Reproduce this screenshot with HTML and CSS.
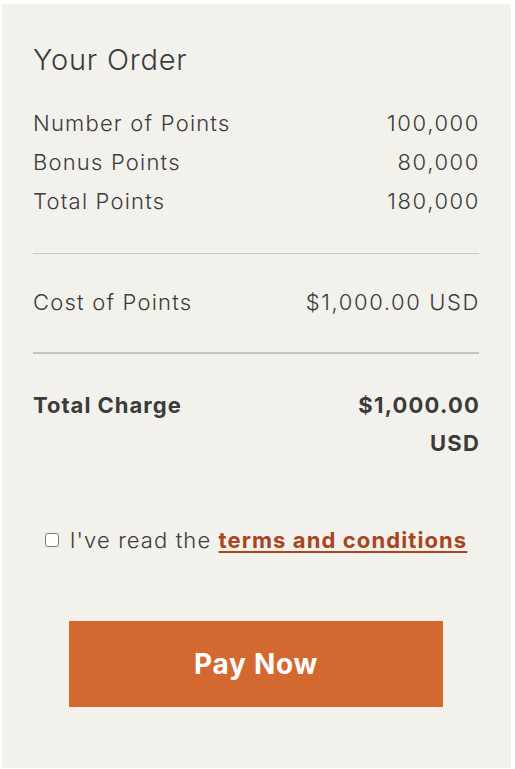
FILE: index.html
```html
<!DOCTYPE html>
<html>
<head>
<meta charset="utf-8">
<link rel="stylesheet" href="styles.css">
</head>
<body>
<div class="card">
  <h2 class="title">Your Order</h2>
  <div class="group first">
    <div class="row"><span>Number of Points</span><span class="num">100,000</span></div>
    <div class="row"><span>Bonus Points</span><span class="num">80,000</span></div>
    <div class="row"><span>Total Points</span><span class="num">180,000</span></div>
  </div>
  <hr class="rule thin">
  <div class="group cost">
    <div class="row"><span>Cost of Points</span><span class="num">$1,000.00 USD</span></div>
  </div>
  <hr class="rule thick">
  <div class="group total">
    <div class="row"><span>Total Charge</span><span class="amount">$1,000.00<br>USD</span></div>
  </div>
  <label class="terms"><input type="checkbox" class="check"><span>I've read the <a href="#" class="link">terms and conditions</a></span></label>
  <div class="actions"><button class="pay">Pay Now</button></div>
</div>
</body>
</html>
```
FILE: styles.css
```css
html, body { margin: 0; padding: 0; background: #fff; }
body { font-family: Inter, "Noto Sans", sans-serif; color: #3b3b3b; }
.card {
  margin: 4px 4px 1px 2px;
  width: 509px;
  height: 764px;
  box-sizing: border-box;
  background: #f2f1ec;
  padding: 36px 32px 0 31px;
}
.title {
  margin: 0;
  font-size: 29px;
  font-weight: 300;
  line-height: 40px;
  letter-spacing: 0.8px;
}
.first { margin-top: 24px; }
.cost { margin-top: 29px; }
.total { margin-top: 32px; }
.row {
  display: flex;
  justify-content: space-between;
  font-size: 22px;
  font-weight: 300;
  line-height: 39px;
  letter-spacing: 1.2px;
}
.num { letter-spacing: 1.6px; margin-right: -1px; }
.amount { text-align: right; letter-spacing: 1.2px; margin-right: -1px; }
.rule { border: 0; margin: 32px 0 0; }
.thin { border-top: 1px solid #c9c8c4; }
.thick { border-top: 2px solid #c6c5c1; margin-top: 30px; }
.total .row { font-weight: 700; line-height: 38px; letter-spacing: 1px; }
.terms {
  display: flex;
  align-items: center;
  justify-content: center;
  margin-top: 65px;
  font-size: 22px;
  font-weight: 300;
  letter-spacing: 1.1px;
}
.check { width: 14px; height: 14px; margin: 0 11px 0 0; }
.link { color: #a8451e; font-weight: 700; letter-spacing: 1.1px; text-decoration: underline; text-decoration-thickness: 2px; text-underline-offset: 3px; }
.actions { display: flex; justify-content: center; margin-top: 68px; }
.pay {
  width: 374px;
  height: 86px;
  background: #d46831;
  color: #fff;
  border: 0;
  font-family: inherit;
  font-size: 28px;
  font-weight: 700;
  letter-spacing: 0.7px;
}
```
